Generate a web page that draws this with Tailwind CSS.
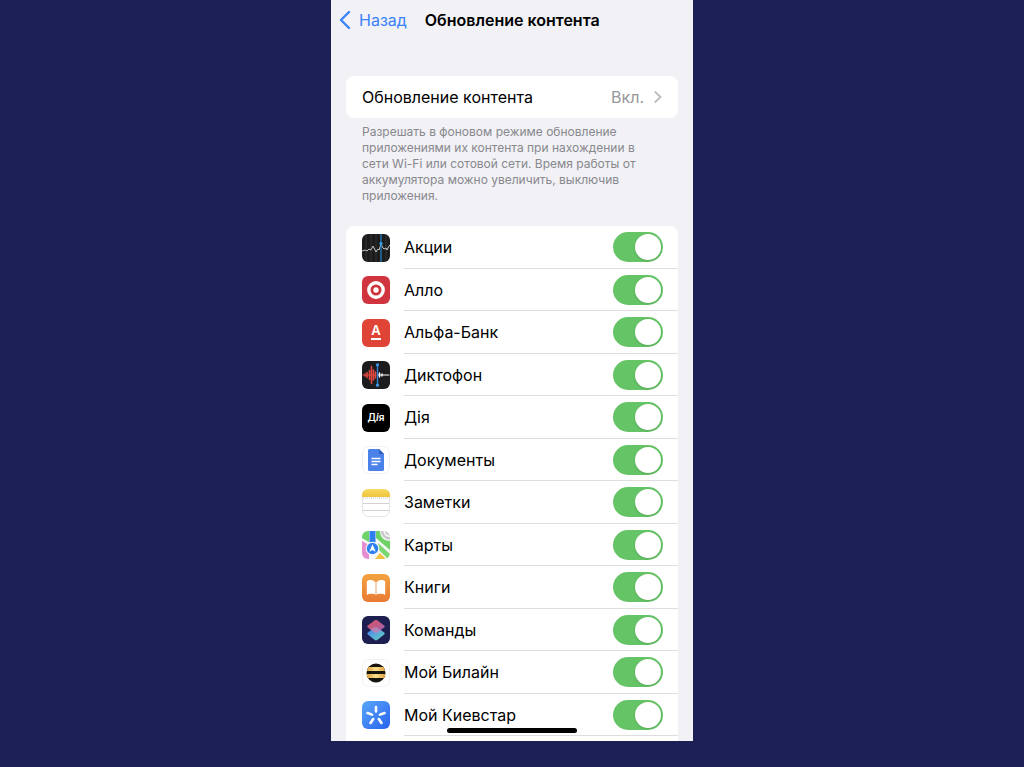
<!DOCTYPE html>
<html lang="ru">
<head>
    <meta charset="UTF-8" />
    <meta name="viewport" content="width=device-width, initial-scale=1.0" />
    <title>Обновление контента</title>
    <script src="https://cdn.jsdelivr.net/npm/@tailwindcss/browser@4"></script>
</head>
<body class="flex min-h-screen flex-col bg-[#1d2056] pb-[26px] font-['Inter','Liberation_Sans',sans-serif] text-black">
    <main class="relative mx-auto flex w-full max-w-[362px] flex-1 flex-col bg-[#f1f1f6] px-[15px]">
        <!-- Barre de navigation -->
        <header class="-ml-[7px] flex h-10 items-center">
            <a href="#" class="flex items-center gap-2 text-base text-[#3b82fb]">
                <svg class="h-5 w-3" viewBox="0 0 12 20" fill="none" stroke="currentColor" stroke-width="2.4" stroke-linecap="round" stroke-linejoin="round">
                    <path d="M10 2 2 10l8 8" />
                </svg>
                Назад
            </a>
            <h1 class="ml-[18px] text-base font-semibold">Обновление контента</h1>
        </header>

        <a href="#" class="mt-9 flex h-[42px] items-center rounded-lg bg-white px-4 text-base">
            <span>Обновление контента</span>
            <span class="ml-auto text-[#97979b]">Вкл.</span>
            <svg class="ml-[10px] h-3 w-2" viewBox="0 0 8 12" fill="none" stroke="#bcbcc0" stroke-width="1.8" stroke-linecap="round" stroke-linejoin="round">
                <path d="M1.2 1 6.6 6l-5.4 5" />
            </svg>
        </a>
        <p class="mt-[6px] px-4 text-xs leading-4 text-[#88888d]">
            Разрешать в фоновом режиме обновление<br />
            приложениями их контента при нахождении в<br />
            сети Wi-Fi или сотовой сети. Время работы от<br />
            аккумулятора можно увеличить, выключив<br />
            приложения.
        </p>

        <!-- Liste des applications -->
        <ul class="mt-[22px] flex-1 rounded-t-lg bg-white pl-4 text-base">
            <li class="flex h-[42px] items-center gap-[14px] odd:h-[43px]">
                <svg class="size-7 shrink-0 rounded-md" viewBox="0 0 28 28" fill="none">
                    <rect width="28" height="28" fill="#1c1c1d" />
                    <path d="M4 0v28M9 0v28M14 0v28M24 0v28" stroke="#3c3c3e" stroke-width=".7" />
                    <path d="M0 17l3-1 2 1 2-2 2 1 2-4 2 4 1 2 2-3 1 1 2-6 2 4 1 1 2-1 1 2 2-4 1-1" stroke="#c4c4c6" />
                    <path d="M19 0v28" stroke="#2686cf" stroke-width="1.2" />
                    <circle cx="19" cy="9.5" r="1.6" fill="#39a0ed" />
                </svg>
                <div class="flex h-full flex-1 items-center justify-between border-b border-[#dedee0] pr-[15px]">
                    <label for="stocks">Акции</label>
                    <input id="stocks" type="checkbox" role="switch" checked class="h-[30px] w-[50px] appearance-none rounded-full bg-[#d8d8dc] p-[2px] before:block before:size-[26px] before:rounded-full before:bg-white before:shadow-sm checked:bg-[#65c466] checked:before:ml-auto" />
                </div>
            </li>
            <li class="flex h-[42px] items-center gap-[14px] odd:h-[43px]">
                <svg class="size-7 shrink-0 rounded-md" viewBox="0 0 28 28" fill="none">
                    <rect width="28" height="28" fill="#d0343f" />
                    <circle cx="14" cy="14" r="7.2" stroke="#fff" stroke-width="3.4" />
                    <circle cx="14" cy="14" r="2.7" fill="#fff" />
                </svg>
                <div class="flex h-full flex-1 items-center justify-between border-b border-[#dedee0] pr-[15px]">
                    <label for="allo">Алло</label>
                    <input id="allo" type="checkbox" role="switch" checked class="h-[30px] w-[50px] appearance-none rounded-full bg-[#d8d8dc] p-[2px] before:block before:size-[26px] before:rounded-full before:bg-white before:shadow-sm checked:bg-[#65c466] checked:before:ml-auto" />
                </div>
            </li>
            <li class="flex h-[42px] items-center gap-[14px] odd:h-[43px]">
                <svg class="size-7 shrink-0 rounded-md" viewBox="0 0 28 28">
                    <rect width="28" height="28" fill="#df4437" />
                    <text x="14" y="16" text-anchor="middle" font-family="Inter, sans-serif" font-size="13" font-weight="600" fill="#fff">А</text>
                    <rect x="9" y="19" width="10" height="2" fill="#fff" />
                </svg>
                <div class="flex h-full flex-1 items-center justify-between border-b border-[#dedee0] pr-[15px]">
                    <label for="alfa">Альфа-Банк</label>
                    <input id="alfa" type="checkbox" role="switch" checked class="h-[30px] w-[50px] appearance-none rounded-full bg-[#d8d8dc] p-[2px] before:block before:size-[26px] before:rounded-full before:bg-white before:shadow-sm checked:bg-[#65c466] checked:before:ml-auto" />
                </div>
            </li>
            <li class="flex h-[42px] items-center gap-[14px] odd:h-[43px]">
                <svg class="size-7 shrink-0 rounded-md" viewBox="0 0 28 28" stroke-linecap="round">
                    <rect width="28" height="28" fill="#1c1c1e" />
                    <path d="M3 13v2M5 11.500v5M7.500 9.500v9M9.500 5.500v17M11.500 9v10M13.500 11v6" stroke="#e0483f" stroke-width="1.6" />
                    <path d="M1 14h13" stroke="#e0483f" />
                    <path d="M16 14h11" stroke="#fff" />
                    <path d="M17.500 12v4M20 13v2" stroke="#fff" stroke-width="1.4" />
                    <path d="M15.500 4v20" stroke="#3182d0" stroke-width="1.4" />
                    <circle cx="15.500" cy="3.800" r="1.600" fill="#3c98ea" />
                    <circle cx="15.500" cy="24.200" r="1.600" fill="#3c98ea" />
                </svg>
                <div class="flex h-full flex-1 items-center justify-between border-b border-[#dedee0] pr-[15px]">
                    <label for="voice">Диктофон</label>
                    <input id="voice" type="checkbox" role="switch" checked class="h-[30px] w-[50px] appearance-none rounded-full bg-[#d8d8dc] p-[2px] before:block before:size-[26px] before:rounded-full before:bg-white before:shadow-sm checked:bg-[#65c466] checked:before:ml-auto" />
                </div>
            </li>
            <li class="flex h-[42px] items-center gap-[14px] odd:h-[43px]">
                <svg class="size-7 shrink-0 rounded-md" viewBox="0 0 28 28">
                    <rect width="28" height="28" fill="#000" />
                    <text x="14" y="17" text-anchor="middle" font-family="Inter, sans-serif" font-size="10" font-weight="600" fill="#fff">Д<tspan font-style="italic">і</tspan>я</text>
                </svg>
                <div class="flex h-full flex-1 items-center justify-between border-b border-[#dedee0] pr-[15px]">
                    <label for="diia">Дія</label>
                    <input id="diia" type="checkbox" role="switch" checked class="h-[30px] w-[50px] appearance-none rounded-full bg-[#d8d8dc] p-[2px] before:block before:size-[26px] before:rounded-full before:bg-white before:shadow-sm checked:bg-[#65c466] checked:before:ml-auto" />
                </div>
            </li>
            <li class="flex h-[42px] items-center gap-[14px] odd:h-[43px]">
                <svg class="size-7 shrink-0" viewBox="0 0 28 28" fill="none">
                    <rect x=".5" y=".5" width="27" height="27" rx="6" fill="#fff" stroke="#f0f0f2" />
                    <path d="M7.500 3H17l5 5v15.500a1.500 1.500 0 0 1-1.500 1.500h-13A1.500 1.500 0 0 1 6 23.500v-19A1.500 1.500 0 0 1 7.500 3Z" fill="#4b82ea" />
                    <path d="M17 3l5 5h-5Z" fill="#2f5fb8" />
                    <path d="M9.500 12.500h9M9.500 15.500h9M9.500 18.500h6" stroke="#fff" stroke-width="1.3" />
                </svg>
                <div class="flex h-full flex-1 items-center justify-between border-b border-[#dedee0] pr-[15px]">
                    <label for="docs">Документы</label>
                    <input id="docs" type="checkbox" role="switch" checked class="h-[30px] w-[50px] appearance-none rounded-full bg-[#d8d8dc] p-[2px] before:block before:size-[26px] before:rounded-full before:bg-white before:shadow-sm checked:bg-[#65c466] checked:before:ml-auto" />
                </div>
            </li>
            <li class="flex h-[42px] items-center gap-[14px] odd:h-[43px]">
                <svg class="size-7 shrink-0" viewBox="0 0 28 28" fill="none">
                    <defs>
                        <linearGradient id="notesTop" x2="0" y2="1"><stop stop-color="#f9da5f" /><stop offset="1" stop-color="#efc33e" /></linearGradient>
                    </defs>
                    <rect x=".5" y=".5" width="27" height="27" rx="6" fill="#fff" stroke="#e4e4e6" />
                    <path d="M0 8V6a6 6 0 0 1 6-6h16a6 6 0 0 1 6 6v2Z" fill="url(#notesTop)" />
                    <path d="M1 9h26" stroke="#c2c2c4" stroke-dasharray="1 1" />
                    <path d="M1 14.500h26M1 21.500h26" stroke="#d2d2d4" />
                </svg>
                <div class="flex h-full flex-1 items-center justify-between border-b border-[#dedee0] pr-[15px]">
                    <label for="notes">Заметки</label>
                    <input id="notes" type="checkbox" role="switch" checked class="h-[30px] w-[50px] appearance-none rounded-full bg-[#d8d8dc] p-[2px] before:block before:size-[26px] before:rounded-full before:bg-white before:shadow-sm checked:bg-[#65c466] checked:before:ml-auto" />
                </div>
            </li>
            <li class="flex h-[42px] items-center gap-[14px] odd:h-[43px]">
                <svg class="size-7 shrink-0 rounded-md" viewBox="0 0 28 28" fill="none">
                    <rect width="28" height="28" fill="#f7f7f7" />
                    <path d="M0 0h7v11L0 7Z" fill="#6ed267" />
                    <path d="M14 0h4c0 6 4 10 10 10v9L14 7Z" fill="#6ed267" />
                    <path d="M0 10l7 4v14H0Z" fill="#e48dd0" />
                    <path d="M13 28l5-6 6 6Z" fill="#f4c344" />
                    <path d="M16 12l12 11v5h-2l-9-9Z" fill="#7bd76f" />
                    <path d="M20 0a8 8 0 0 0 8 7.500" stroke="#c8c8cb" stroke-width="2.5" />
                    <path d="M24 0a4 4 0 0 0 4 3.500" stroke="#c8c8cb" stroke-width="2" />
                    <path d="M7.500 0h6v12h-6Z" fill="#2f80ee" />
                    <circle cx="10.500" cy="17.500" r="6.800" fill="#fff" />
                    <circle cx="10.500" cy="17.500" r="5.800" fill="#2f80ee" />
                    <path d="M10.500 13.200l3.200 7.600-3.200-1.700-3.200 1.700Z" fill="#fff" />
                </svg>
                <div class="flex h-full flex-1 items-center justify-between border-b border-[#dedee0] pr-[15px]">
                    <label for="maps">Карты</label>
                    <input id="maps" type="checkbox" role="switch" checked class="h-[30px] w-[50px] appearance-none rounded-full bg-[#d8d8dc] p-[2px] before:block before:size-[26px] before:rounded-full before:bg-white before:shadow-sm checked:bg-[#65c466] checked:before:ml-auto" />
                </div>
            </li>
            <li class="flex h-[42px] items-center gap-[14px] odd:h-[43px]">
                <svg class="size-7 shrink-0 rounded-md" viewBox="0 0 28 28" fill="none">
                    <defs>
                        <linearGradient id="booksBg" x2="0" y2="1"><stop stop-color="#f2a33f" /><stop offset="1" stop-color="#e97a34" /></linearGradient>
                    </defs>
                    <rect width="28" height="28" fill="url(#booksBg)" />
                    <path d="M13.600 8.500C12.500 5.800 7 5.200 4.800 7.500V21c2-1.700 7.800-1.700 8.800 0ZM14.400 8.500c1.100-2.700 6.600-3.300 8.800-1V21c-2-1.700-7.800-1.700-8.800 0Z" fill="#fff" />
                </svg>
                <div class="flex h-full flex-1 items-center justify-between border-b border-[#dedee0] pr-[15px]">
                    <label for="books">Книги</label>
                    <input id="books" type="checkbox" role="switch" checked class="h-[30px] w-[50px] appearance-none rounded-full bg-[#d8d8dc] p-[2px] before:block before:size-[26px] before:rounded-full before:bg-white before:shadow-sm checked:bg-[#65c466] checked:before:ml-auto" />
                </div>
            </li>
            <li class="flex h-[42px] items-center gap-[14px] odd:h-[43px]">
                <svg class="size-7 shrink-0 rounded-md" viewBox="0 0 28 28" fill="none">
                    <defs>
                        <linearGradient id="scTop" x2="1" y2="1"><stop stop-color="#ee5a68" /><stop offset=".5" stop-color="#dd6590" /><stop offset="1" stop-color="#9a6fd0" /></linearGradient>
                        <linearGradient id="scBottom" x2="1" y2="1"><stop stop-color="#3f74e6" /><stop offset=".5" stop-color="#5aa8dc" /><stop offset="1" stop-color="#5cd8b4" /></linearGradient>
                    </defs>
                    <rect width="28" height="28" fill="#1c1f50" />
                    <path d="M12.800 11.600 5.800 16.600q-1.300 1 0 2l7 5.400q1.200.9 2.400 0l7-5.400q1.300-1 0-2l-7-5q-1.200-.9-2.400 0Z" fill="url(#scBottom)" />
                    <path d="M12.800 4.200 5.800 9.400q-1.300 1 0 2l7 5.200q1.200.9 2.400 0l7-5.200q1.300-1 0-2l-7-5.200q-1.200-.9-2.400 0Z" fill="url(#scTop)" fill-opacity=".85" />
                    <path d="M14 10.900l6.500 5-5.300 0.900q-1.200.7-2.400 0L7.500 12.700Z" fill="#a9a0c4" fill-opacity=".45" />
                </svg>
                <div class="flex h-full flex-1 items-center justify-between border-b border-[#dedee0] pr-[15px]">
                    <label for="shortcuts">Команды</label>
                    <input id="shortcuts" type="checkbox" role="switch" checked class="h-[30px] w-[50px] appearance-none rounded-full bg-[#d8d8dc] p-[2px] before:block before:size-[26px] before:rounded-full before:bg-white before:shadow-sm checked:bg-[#65c466] checked:before:ml-auto" />
                </div>
            </li>
            <li class="flex h-[42px] items-center gap-[14px] odd:h-[43px]">
                <svg class="size-7 shrink-0" viewBox="0 0 28 28" fill="none">
                    <defs>
                        <clipPath id="ball"><circle cx="14" cy="14" r="9.500" /></clipPath>
                        <linearGradient id="stripe"><stop stop-color="#d99a35" /><stop offset=".5" stop-color="#fbe08a" /><stop offset="1" stop-color="#d99a35" /></linearGradient>
                    </defs>
                    <rect x=".5" y=".5" width="27" height="27" rx="6" fill="#fff" stroke="#f0f0f2" />
                    <g clip-path="url(#ball)">
                        <rect x="4" y="4" width="20" height="20" fill="#17140f" />
                        <rect x="4" y="8" width="20" height="4" fill="url(#stripe)" />
                        <rect x="4" y="15" width="20" height="4" fill="url(#stripe)" />
                    </g>
                </svg>
                <div class="flex h-full flex-1 items-center justify-between border-b border-[#dedee0] pr-[15px]">
                    <label for="beeline">Мой Билайн</label>
                    <input id="beeline" type="checkbox" role="switch" checked class="h-[30px] w-[50px] appearance-none rounded-full bg-[#d8d8dc] p-[2px] before:block before:size-[26px] before:rounded-full before:bg-white before:shadow-sm checked:bg-[#65c466] checked:before:ml-auto" />
                </div>
            </li>
            <li class="flex h-[42px] items-center gap-[14px] odd:h-[43px]">
                <svg class="size-7 shrink-0 rounded-md" viewBox="0 0 28 28" fill="none">
                    <defs>
                        <linearGradient id="ksBg" x2="1" y2="1"><stop stop-color="#58a8f8" /><stop offset="1" stop-color="#2a62ee" /></linearGradient>
                    </defs>
                    <rect width="28" height="28" fill="url(#ksBg)" />
                    <path d="M14 6v4.500M5.500 12l4.500 1.600M22.500 12l-4.500 1.600M11.200 18l-2.700 4M16.800 18l2.700 4" stroke="#fff" stroke-width="2.6" stroke-linecap="round" />
                </svg>
                <div class="flex h-full flex-1 items-center justify-between border-b border-[#dedee0] pr-[15px]">
                    <label for="kyivstar">Мой Киевстар</label>
                    <input id="kyivstar" type="checkbox" role="switch" checked class="h-[30px] w-[50px] appearance-none rounded-full bg-[#d8d8dc] p-[2px] before:block before:size-[26px] before:rounded-full before:bg-white before:shadow-sm checked:bg-[#65c466] checked:before:ml-auto" />
                </div>
            </li>
        </ul>

        <div class="absolute bottom-2 left-1/2 h-[5px] w-[130px] -translate-x-1/2 rounded-full bg-black"></div>
    </main>
</body>
</html>
